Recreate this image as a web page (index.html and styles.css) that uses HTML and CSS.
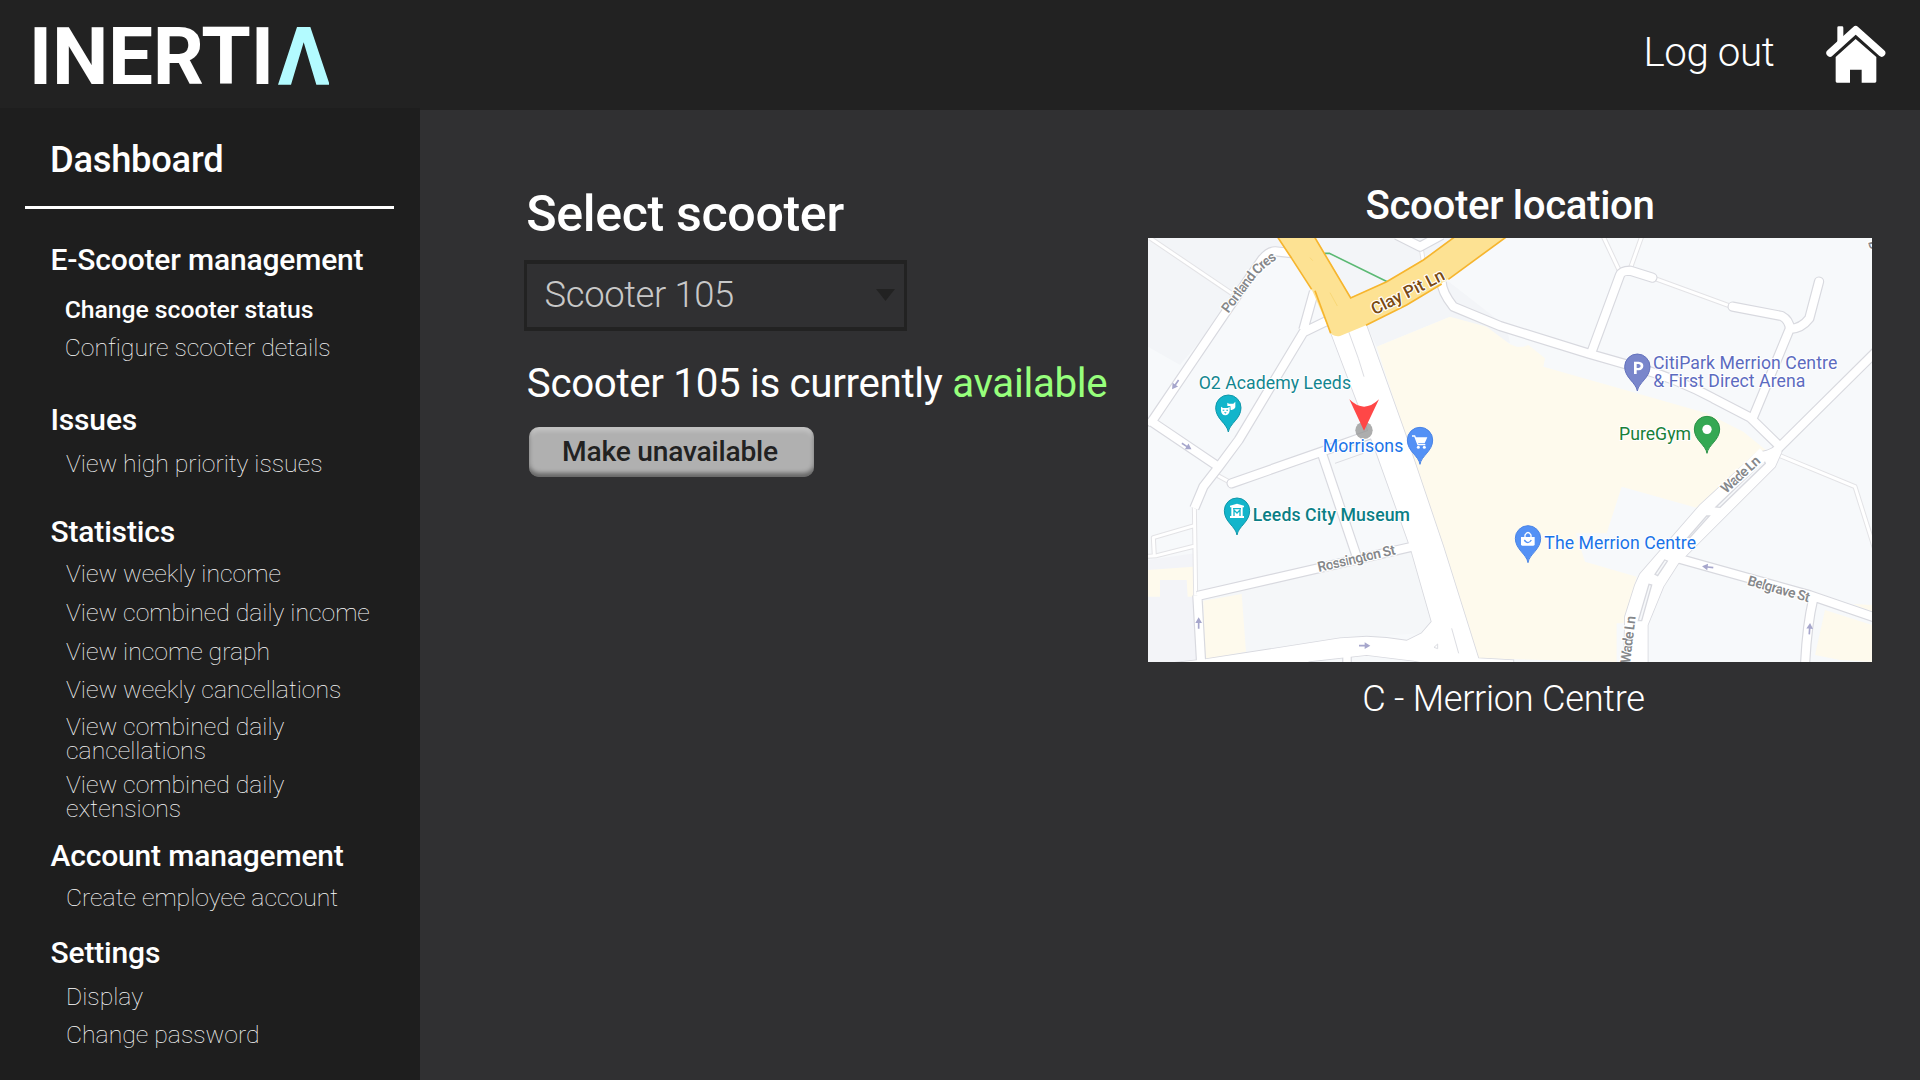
FILE: index.html
```html
<!DOCTYPE html>
<html lang="en">
<head>
<meta charset="utf-8">
<title>Inertia - Change scooter status</title>
<link rel="stylesheet" href="styles.css">
</head>
<body>
<header class="topbar">
  <a class="logo" aria-label="Inertia"><span class="logo-text">INERTI</span><svg class="logo-mark" viewBox="834 81 155 173"><path d="M834 254 891 81H931L989 254H949L911 127 873 254Z"/></svg></a>
  <nav class="topnav">
    <a class="logout">Log out</a>
    <svg class="home" viewBox="680 74 180 176"><path d="M714 135V82q0-4 4-4h10q4 0 4 4v36Z"/><path class="roof" d="M692 158 769 88 847 158"/><path d="M769 116 831 170V243q0 4-4 4H787V208H752V247H713q-4 0-4-4V170Z"/></svg>
  </nav>
</header>
<div class="layout">
  <aside class="sidebar">
    <h2 class="side-title">Dashboard</h2>
    <hr class="divider">
    <section class="group group-scooter">
      <h3>E-Scooter management</h3>
      <ul><li class="active">Change scooter status</li><li>Configure scooter details</li></ul>
    </section>
    <section class="group group-issues">
      <h3>Issues</h3>
      <ul><li>View high priority issues</li></ul>
    </section>
    <section class="group group-stats">
      <h3>Statistics</h3>
      <ul><li>View weekly income</li><li>View combined daily income</li><li>View income graph</li><li class="close">View weekly cancellations</li><li class="two-line">View combined daily<br>cancellations</li><li class="two-line tight">View combined daily<br>extensions</li></ul>
    </section>
    <section class="group group-account">
      <h3>Account management</h3>
      <ul><li>Create employee account</li></ul>
    </section>
    <section class="group group-settings">
      <h3>Settings</h3>
      <ul><li>Display</li><li>Change password</li></ul>
    </section>
  </aside>
  <main class="content">
    <section class="chooser">
      <h1>Select scooter</h1>
      <div class="select"><span>Scooter 105</span><svg class="caret" viewBox="0 0 19 12"><path d="M0 0H19L9.500 12Z"/></svg></div>
      <p class="status">Scooter 105 is currently <span class="ok">available</span></p>
      <button class="action" type="button">Make unavailable</button>
    </section>
    <section class="location">
      <h2>Scooter location</h2>
      <svg class="map" viewBox="24 174 2172 1272" preserveAspectRatio="none">
        <defs>
          <path id="pin" d="M0 73C-4 47-38 34-38 0A38 38 0 1 1 38 0C38 34 4 47 0 73Z"/>
          <path id="arrow" d="M-17-2.500H0V-10L17 0 0 10V2.500H-17Z"/>
          <g id="roads" fill="none" stroke-linejoin="round">
            <path d="M460 220 405 214Q385 214 365 240L255 400 35 725 232 858"/>
            <path d="M24 720 36 728"/>
            <path d="M522 335 490 450M570 418 490 457 296 780 235 862 190 920 163 985"/>
            <path d="M275 910 545 815 700 760" stroke-linecap="round"/>
            <path d="M545 818 652 1135"/>
            <path d="M172 1248 830 1097M172 1246 184 1460"/>
            <path d="M770 165 840 200 905 165"/>
            <path d="M905 305Q905 335 940 380L1080 438 1350 522 1500 565Q1620 600 1720 655L1830 712 1915 795"/>
            <path d="M1355 515 1440 285Q1445 272 1470 272L1537 293M1778 380 1925 408Q1948 420 1950 447Q1985 445 2008 415L2037 305M1950 445 1840 710" stroke-linecap="round"/>
            <path d="M1905 815 2220 503"/>
            <path d="M1610 1134 2010 1246 2220 1318M2020 1255Q2000 1340 1995 1460"/>
          </g>
          <g id="lanes" fill="none" stroke-linejoin="round">
            <path d="M30 174 275 340"/>
            <path d="M163 975 167 1250M163 1037 40 1073 43 1128M20 1129 50 1127 165 1098M230 885 272 908"/>
            <path d="M843 200 850 245M1390 170 1438 272M1505 170 1470 268M1537 293 1775 380"/>
            <path d="M1915 825 2145 920 2205 1110"/>
          </g>
          <g id="avenues">
            <path d="M566 440 710 820 805 1085 815 1115 875 1325 845 1360 800 1382Q740 1371 680 1370L600 1375 195 1438 90 1450V1470H420L510 1444 680 1425 820 1442 960 1470H1120V1441L1015 1435 910 1100 795 760 675 425Z"/>
            <path d="M1912 798 1880 812 1850 819 1680 975 1500 1182 1485 1215 1455 1310 1452 1470H1523V1335L1570 1220 1615 1150 1640 1125 1905 860 1925 815Z"/>
          </g>
        </defs>
        <path fill="#f7f9fb" d="M24 174H2196V1446H24Z"/>
        <path fill="#f3f5f8" d="M24 174H412L455 235 400 214 250 400 120 555 24 500ZM525 174H940L740 305 632 352ZM680 435 920 300 1100 440 1110 490 930 410 710 500Z"/>
        <path fill="#f3f4f8" d="M24 1140 163 1120V1250L184 1446H24Z"/>
        <path fill="#f5f7f9" d="M190 1250 815 1110 875 1325 845 1360 680 1370 195 1438Z"/>
        <path fill="#fefaed" d="M24 1170 160 1160V1250H143L140 1200H60V1250H24ZM190 1262 305 1242 318 1415 195 1438Z"/>
        <path fill="#fefaed" d="M710 500 930 410 1040 440 1110 493 1130 500 1150 500 1165 495 1215 535 1210 560 1490 640 1700 700 1810 755 1880 812 1680 986 1445 920 1400 1060H1308L1335 1145 1490 1190 1455 1330H1430V1446L1015 1435Z"/>
        <path fill="#fefaed" d="M2055 1290 2196 1335V1446L2100 1440 2025 1425ZM2140 1272 2196 1275V1295Z"/>
        <use href="#lanes" stroke="#e3e3e6" stroke-width="15"/>
        <use href="#lanes" stroke="#fff" stroke-width="9"/>
        <use href="#roads" stroke="#d8d9df" stroke-width="31"/>
        <use href="#avenues" fill="#fff" stroke="#d8d9df" stroke-width="5"/>
        <path d="M621 1425V1450" stroke="#d8d9df" stroke-width="29"/>
        <use href="#roads" stroke="#fff" stroke-width="24"/>
        <use href="#avenues" fill="#fff"/>
        <path d="M621 1420V1450" stroke="#fff" stroke-width="22"/>
        <path fill="none" stroke="#dcdde2" stroke-width="3" d="M626 455 655 535 672 590M935 1345 956 1420M882 1402 893 1392V1406ZM670 820 585 850"/>
        <path fill="#f7f9fb" stroke="#d8d9df" stroke-width="4" d="M1728 981 1872 842 1876 850 1740 982ZM1644 1072 1700 1008H1708L1650 1072ZM1545 1183 1574 1140 1582 1143 1553 1187ZM1495 1322 1527 1213 1535 1215 1505 1322Z"/>
        <path fill="#fff" d="M1730 930 1860 805 1885 835 1750 955Z"/>
        <path fill="none" stroke="#5bb974" stroke-width="5" d="M553 220H568L745 307"/>
        <path fill="#fde293" d="M412 170 455 235 515 328 568 450Q575 472 600 468L680 435 800 375 920 300 1100 170H945L850 240 740 305 632 352 525 170Z"/>
        <path fill="none" stroke="#f6b52e" stroke-width="5" d="M412 170 455 235M455 235 515 328M525 332 572 460M678 436 800 375 905 312M925 298 1100 170M945 170 850 240 740 305 632 354 523 170"/>
        <path fill="none" stroke="#f9d878" stroke-width="3" d="M510 233 518 242M570 338 592 378"/>
        <g fill="#a6a6cc">
          <use href="#arrow" transform="translate(106 614) rotate(125)"/>
          <use href="#arrow" transform="translate(140 799) rotate(32)"/>
          <use href="#arrow" transform="translate(176 1329) rotate(-90)"/>
          <use href="#arrow" transform="translate(674 1397)"/>
          <use href="#arrow" transform="translate(1703 1161) rotate(187)"/>
          <use href="#arrow" transform="translate(2009 1346) rotate(-86)"/>
        </g>
        <g class="street">
          <path id="cres" fill="none" stroke="none" d="M265 401 344 296Q372 262 420 231"/>
          <text><textPath href="#cres" textLength="222">Portland Cres</textPath></text>
          <text x="536" y="1176" textLength="238" transform="rotate(-13 536 1176)">Rossington St</text>
          <text x="1758" y="942" textLength="143" transform="rotate(-42 1758 942)">Wade Ln</text>
          <text x="1470" y="1451" textLength="143" transform="rotate(-83 1470 1451)">Wade Ln</text>
          <text x="1820" y="1214" textLength="192" transform="rotate(16 1820 1214)">Belgrave St</text>
          <text x="2184" y="186" transform="rotate(75 2184 186)">D</text>
        </g>
        <text class="main-street" x="704" y="406" textLength="240" transform="rotate(-27 704 406)">Clay Pit Ln</text>
        <circle cx="672" cy="751" r="26" fill="#919191" opacity=".75"/>
        <g class="place">
          <text fill="#128690" x="176" y="628" textLength="457">O2 Academy Leeds</text>
          <text fill="#1a73e8" x="548" y="815" textLength="242">Morrisons</text>
          <text fill="#5c6bc0" x="1539" y="567" textLength="553">CitiPark Merrion Centre</text>
          <text fill="#5c6bc0" x="1540" y="620" textLength="456">&amp; First Direct Arena</text>
          <text fill="#188038" x="1437" y="780" textLength="216">PureGym</text>
          <text fill="#1a73e8" x="1213" y="1108" textLength="455">The Merrion Centre</text>
          <text class="strong" fill="#0b7f86" x="338" y="1024" textLength="472">Leeds City Museum</text>
        </g>
        <g class="pins">
          <use href="#pin" x="265" y="683" fill="#12b5cb" stroke="#0f97a9"/>
          <use href="#pin" x="291" y="992" fill="#12b5cb" stroke="#0f97a9"/>
          <use href="#pin" x="840" y="780" fill="#5491f5" stroke="#4a84e6"/>
          <use href="#pin" x="1492" y="560" fill="#7986cb" stroke="#6472bd"/>
          <use href="#pin" x="1701" y="747" fill="#34a853" stroke="#2a9147"/>
          <use href="#pin" x="1164" y="1075" fill="#5491f5" stroke="#4a84e6"/>
        </g>
        <g fill="#fff">
          <path d="M243 680 249 684H263L269 680V692Q267 705 256 706 244 704 243 692ZM262 668 267 671H280L286 665V682Q282 692 272 690L271 678H262Z"/>
          <path fill="#12b5cb" d="M248 689h5v3h-5ZM259 689h5v3h-5ZM252 697h8l-4 4Z"/>
          <path d="M270 982V977L291 971 312 977V982H308V1008H312V1014H270V1008H274V982Z"/>
          <path fill="none" stroke="#12b5cb" stroke-width="4" d="M282 1008V990L291 999 300 990V1008M279 986H303"/>
          <path fill="none" stroke="#fff" stroke-width="4" d="M816 768H824L834 794H856"/>
          <path d="M826 772H862L854 790H832Z"/><circle cx="835" cy="802" r="4.500"/><circle cx="853" cy="802" r="4.500"/>
          <path fill-rule="evenodd" d="M1482 545H1496Q1510 546 1510 558 1509 570 1496 571H1490V582H1482ZM1490 552V564H1496Q1502 563 1502 558 1502 553 1496 552Z"/>
          <circle cx="1701" cy="748" r="14"/>
          <path d="M1143 1071H1184V1093Q1184 1097 1180 1097H1147Q1143 1097 1143 1093Z"/>
          <path fill="none" stroke="#fff" stroke-width="4" d="M1155 1073V1065Q1164 1050 1173 1065V1073"/>
          <path fill="none" stroke="#5491f5" stroke-width="4" d="M1153 1080Q1164 1096 1174 1080"/>
        </g>
        <path fill="#ff4747" d="M628 658Q672 702 717 658L672 752Z"/>
      </svg>
      <p class="caption">C - Merrion Centre</p>
    </section>
  </main>
</div>
</body>
</html>
```
FILE: styles.css
```css
* { box-sizing: border-box; }
body {
  margin: 0;
  height: 1080px;
  overflow: hidden;
  display: flex;
  flex-direction: column;
  background: #303032;
  color: #fff;
  font-family: Roboto, "Liberation Sans", sans-serif;
}
h1, h2, h3, p, ul { margin: 0; padding: 0; font-weight: 550; }
ul { list-style: none; }
svg { display: block; }

.topbar {
  height: 108px;
  background: #222;
  display: flex;
  justify-content: space-between;
  align-items: flex-start;
  padding: 17px 33.700px 0 28.800px;
}
.logo { display: flex; }
.logo-text { font-size: 80px; line-height: 80px; font-weight: 700; letter-spacing: -.3px; }
.logo-mark { width: 51.700px; height: 57.700px; margin: 10px 0 0 4px; fill: #b3fbff; }
.topnav { display: flex; align-items: flex-start; gap: 52px; }
.logout { font-size: 40.300px; line-height: 40px; font-weight: 300; margin-top: 16px; letter-spacing: -.4px; }
.home { width: 60px; height: 58.700px; margin-top: 7.700px; fill: #fff; }
.roof { fill: none; stroke: #fff; stroke-width: 22; stroke-linecap: round; stroke-linejoin: round; }

.layout { flex: 1; display: flex; }
.sidebar { width: 420px; background: #1e1e1e; padding-top: 34px; }
.side-title { font-size: 36.300px; line-height: 36px; padding-left: 50px; letter-spacing: -.25px; }
.divider { height: 3px; border: 0; background: #fff; margin: 28px 26px 0 25px; }
.group h3 { font-size: 30px; line-height: 30px; padding-left: 50.500px; letter-spacing: -.17px; }
.group ul { display: flex; flex-direction: column; gap: 15px; padding-left: 66px; margin-top: 15px; }
.group li { font-size: 24.800px; line-height: 24px; font-weight: 130; letter-spacing: -.01px; white-space: nowrap; }
.group li.active { font-weight: 520; letter-spacing: -.07px; }
.group li.close { margin-top: -1px; }
.group li.two-line { margin-top: -2px; }
.group li.tight { margin-top: -5px; }
.group-scooter { margin-top: 36px; }
.group-scooter ul { margin-top: 23px; gap: 14px; padding-left: 64.700px; }
.group-issues { margin-top: 45px; }
.group-issues ul { margin-top: 17px; }
.group-stats { margin-top: 41px; }
.group-account { margin-top: 20px; }
.group-account ul { margin-top: 15px; }
.group-settings { margin-top: 28px; }
.group-settings ul { margin-top: 17px; gap: 14px; }

.content { flex: 1; display: flex; border-top: 2px solid #222; padding: 76px 48px 0 104px; }
.chooser { width: 624px; padding-top: 3px; }
.chooser h1 { font-size: 50.200px; line-height: 50px; padding-left: 2.300px; letter-spacing: -.37px; }
.select {
  width: 383px;
  height: 71px;
  margin-top: 21px;
  padding: 0 9px 2px 17.600px;
  border: solid #222;
  border-width: 4px 3px;
  display: flex;
  align-items: center;
  justify-content: space-between;
  font-size: 36.400px;
  font-weight: 300;
  letter-spacing: -.37px;
  color: #c8c8c8;
}
.caret { width: 19px; height: 12px; fill: #222; }
.status { font-size: 40.300px; line-height: 40px; font-weight: 400; margin-top: 33px; padding-left: 2.800px; letter-spacing: -.33px; white-space: nowrap; }
.ok { color: #97ff7c; }
.action {
  display: block;
  width: 285px;
  height: 50px;
  margin: 23px 0 0 5px;
  padding: 0 3px 0 0;
  border: 0;
  border-radius: 10px;
  background: #b0b0b0;
  box-shadow: inset 0 -4px 4px rgba(0, 0, 0, .42), inset 0 4px 4px rgba(255, 255, 255, .25);
  color: #222;
  font: 500 28.200px/50px Roboto, "Liberation Sans", sans-serif;
  letter-spacing: -.22px;
}

.location { width: 724px; text-align: center; }
.location h2 { font-size: 40.200px; line-height: 40px; letter-spacing: -.33px; }
.map { width: 724px; height: 424px; margin-top: 12px; }
.caption { font-size: 36.200px; line-height: 36px; font-weight: 300; margin-top: 19px; padding-right: 13px; letter-spacing: -.27px; }
.map text { paint-order: stroke; stroke: #fff; stroke-width: 7; stroke-linejoin: round; }
.street text { font-size: 42px; font-weight: 560; fill: #85878a; }
.main-street { font-size: 51px; font-weight: 500; fill: #7a4a12; }
.place text { font-size: 53px; font-weight: 400; stroke-width: 6; }
.place .strong { font-weight: 530; }
.pins { stroke-width: 3; }
```
